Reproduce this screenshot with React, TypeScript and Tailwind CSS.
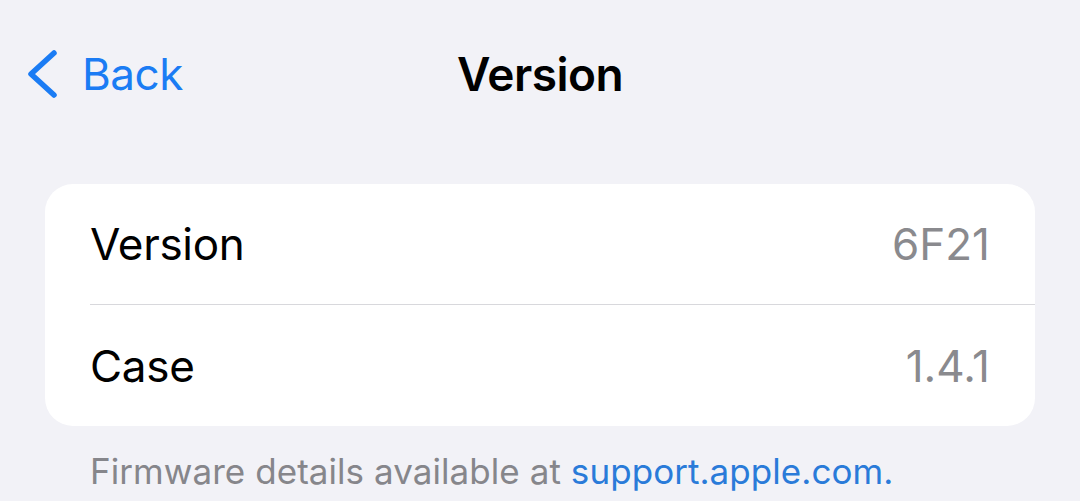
const rows = [
  { label: "Version", value: "6F21" },
  { label: "Case", value: "1.4.1" },
];

export default function App() {
  return (
    <div
      className="h-[501px] w-[1080px] overflow-hidden bg-[#f2f2f7] text-black"
      style={{ fontFamily: "Inter, 'Noto Sans', sans-serif" }}
    >
      <header className="relative flex h-[148px] items-start pt-[46px]">
        <button className="flex items-center pl-[25px] text-[#1b7cf4]">
          <svg width="34" height="50" viewBox="0 0 34 50" fill="none">
            <path
              d="M29 4 L6 25 L29 46"
              stroke="currentColor"
              strokeWidth="5.5"
              strokeLinecap="round"
              strokeLinejoin="round"
            />
          </svg>
          <span className="ml-[23px] text-[44px] leading-[56px] tracking-[-0.5px]">Back</span>
        </button>
        <h1 className="absolute left-1/2 top-[45px] -translate-x-1/2 text-[46px] font-semibold leading-[58px] tracking-[-0.5px]">
          Version
        </h1>
      </header>

      <div className="mx-[45px] mt-[36px] overflow-hidden rounded-[28px] bg-white">
        {rows.map((row, i) => (
          <div key={row.label} className="pl-[45px]">
            <div
              className={
                "flex h-[121px] items-center justify-between pr-[45px] " +
                (i < rows.length - 1 ? "border-b border-[#d8d8dc]" : "")
              }
            >
              <span className="text-[44px] tracking-[-0.3px]">{row.label}</span>
              <span className="text-[44px] tracking-[0px] text-[#8a8a8e]">{row.value}</span>
            </div>
          </div>
        ))}
      </div>

      <p className="mt-[22px] pl-[90px] text-[35px] leading-[46px] tracking-[0.06px] text-[#86868b]">
        Firmware details available at <span className="text-[#2a7bd9]">support.apple.com.</span>
      </p>
    </div>
  );
}
